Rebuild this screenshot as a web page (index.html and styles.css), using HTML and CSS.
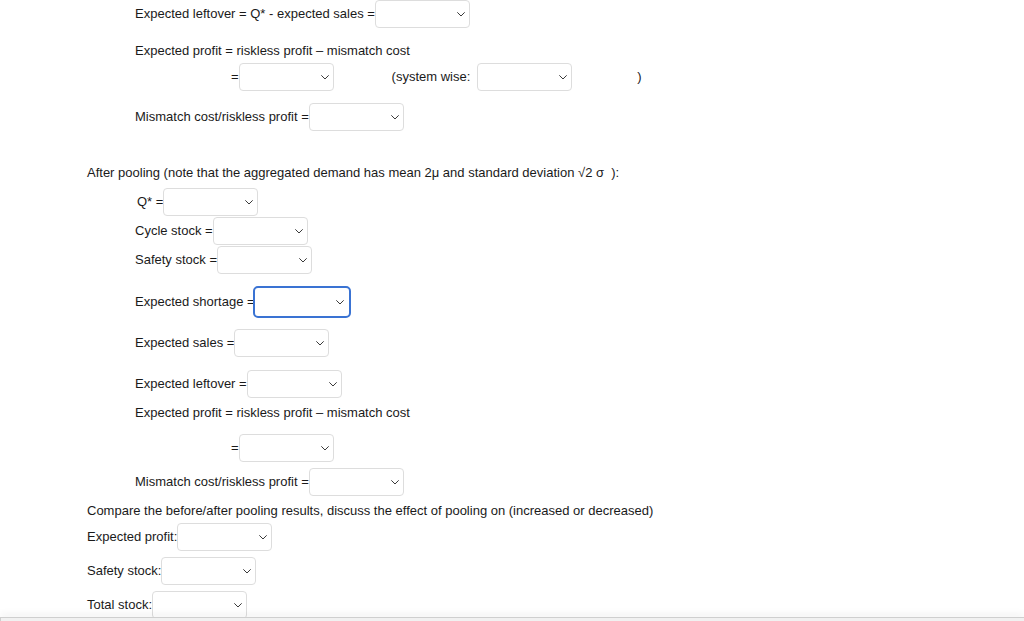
FILE: index.html
```html
<!DOCTYPE html>
<html lang="en">
<head>
<meta charset="utf-8">
<title>Pooling</title>
<link rel="stylesheet" href="styles.css">
</head>
<body>
<div class="page">
  <div class="row sel indent gap-0">
    <span class="lbl">Expected leftover = Q* - expected sales =</span>
    <span class="dd"><select></select><svg class="chev" width="8" height="5" viewBox="0 0 8 5"><path d="M0.6 0.6 L4 4 L7.4 0.6"/></svg></span>
  </div>
  <div class="row txt indent gap-14">Expected profit = riskless profit – mismatch cost</div>
  <div class="row sel eq gap-4">
    <span class="lbl">=</span>
    <span class="dd"><select></select><svg class="chev" width="8" height="5" viewBox="0 0 8 5"><path d="M0.6 0.6 L4 4 L7.4 0.6"/></svg></span>
    <span class="lbl sys">(system wise:</span>
    <span class="dd"><select></select><svg class="chev" width="8" height="5" viewBox="0 0 8 5"><path d="M0.6 0.6 L4 4 L7.4 0.6"/></svg></span>
    <span class="lbl close">)</span>
  </div>
  <div class="row sel indent gap-12">
    <span class="lbl">Mismatch cost/riskless profit =</span>
    <span class="dd"><select></select><svg class="chev" width="8" height="5" viewBox="0 0 8 5"><path d="M0.6 0.6 L4 4 L7.4 0.6"/></svg></span>
  </div>

  <div class="row txt outer gap-33">After pooling (note that the aggregated demand has mean 2μ and standard deviation √2 σ&nbsp;&nbsp;):</div>
  <div class="row sel indent-q gap-7">
    <span class="lbl">Q* =</span>
    <span class="dd"><select></select><svg class="chev" width="8" height="5" viewBox="0 0 8 5"><path d="M0.6 0.6 L4 4 L7.4 0.6"/></svg></span>
  </div>
  <div class="row sel indent gap-1">
    <span class="lbl">Cycle stock =</span>
    <span class="dd"><select></select><svg class="chev" width="8" height="5" viewBox="0 0 8 5"><path d="M0.6 0.6 L4 4 L7.4 0.6"/></svg></span>
  </div>
  <div class="row sel indent gap-1">
    <span class="lbl">Safety stock =</span>
    <span class="dd"><select></select><svg class="chev" width="8" height="5" viewBox="0 0 8 5"><path d="M0.6 0.6 L4 4 L7.4 0.6"/></svg></span>
  </div>
  <div class="row sel indent gap-12">
    <span class="lbl">Expected shortage =</span>
    <span class="dd focus"><select></select><svg class="chev" width="8" height="5" viewBox="0 0 8 5"><path d="M0.6 0.6 L4 4 L7.4 0.6"/></svg></span>
  </div>
  <div class="row sel indent gap-11">
    <span class="lbl">Expected sales =</span>
    <span class="dd"><select></select><svg class="chev" width="8" height="5" viewBox="0 0 8 5"><path d="M0.6 0.6 L4 4 L7.4 0.6"/></svg></span>
  </div>
  <div class="row sel indent gap-13">
    <span class="lbl">Expected leftover =</span>
    <span class="dd"><select></select><svg class="chev" width="8" height="5" viewBox="0 0 8 5"><path d="M0.6 0.6 L4 4 L7.4 0.6"/></svg></span>
  </div>
  <div class="row txt indent gap-6">Expected profit = riskless profit – mismatch cost</div>
  <div class="row sel eq gap-13">
    <span class="lbl">=</span>
    <span class="dd"><select></select><svg class="chev" width="8" height="5" viewBox="0 0 8 5"><path d="M0.6 0.6 L4 4 L7.4 0.6"/></svg></span>
  </div>
  <div class="row sel indent gap-6">
    <span class="lbl">Mismatch cost/riskless profit =</span>
    <span class="dd"><select></select><svg class="chev" width="8" height="5" viewBox="0 0 8 5"><path d="M0.6 0.6 L4 4 L7.4 0.6"/></svg></span>
  </div>

  <div class="row txt outer gap-6">Compare the before/after pooling results, discuss the effect of pooling on (increased or decreased)</div>
  <div class="row sel outer gap-4">
    <span class="lbl">Expected profit:</span>
    <span class="dd"><select></select><svg class="chev" width="8" height="5" viewBox="0 0 8 5"><path d="M0.6 0.6 L4 4 L7.4 0.6"/></svg></span>
  </div>
  <div class="row sel outer gap-6">
    <span class="lbl">Safety stock:</span>
    <span class="dd"><select></select><svg class="chev" width="8" height="5" viewBox="0 0 8 5"><path d="M0.6 0.6 L4 4 L7.4 0.6"/></svg></span>
  </div>
  <div class="row sel outer gap-6">
    <span class="lbl">Total stock:</span>
    <span class="dd"><select></select><svg class="chev" width="8" height="5" viewBox="0 0 8 5"><path d="M0.6 0.6 L4 4 L7.4 0.6"/></svg></span>
  </div>
</div>
<div class="bottom-bar"></div>
</body>
</html>
```

FILE: styles.css
```css
html, body {
  margin: 0;
  padding: 0;
  background: #ffffff;
  overflow: hidden;
}

body {
  font-family: "Liberation Sans", Arial, Helvetica, sans-serif;
  font-size: 13px;
  color: #1a1a1a;
  width: 1024px;
  height: 621px;
}

.page {
  display: flex;
  flex-direction: column;
}

.row {
  display: flex;
  align-items: center;
  white-space: pre;
}

.row.txt {
  height: 16px;
  line-height: 16px;
  padding-top: 1px;
}

.row.sel {
  min-height: 28px;
}

.row.sel .lbl {
  margin-bottom: 1px;
}

.indent { padding-left: 135px; }
.indent-q { padding-left: 137px; }
.outer { padding-left: 87px; }
.eq { padding-left: 231px; }

.gap-0 { margin-top: 0; }
.gap-1 { margin-top: 1px; }
.gap-4 { margin-top: 4px; }
.gap-6 { margin-top: 6px; }
.gap-7 { margin-top: 7px; }
.gap-11 { margin-top: 11px; }
.gap-12 { margin-top: 12px; }
.gap-13 { margin-top: 13px; }
.gap-14 { margin-top: 14px; }
.gap-33 { margin-top: 33px; }

.sys { margin-left: 58px; margin-right: 7px; }
.close { margin-left: 65px; }

.dd {
  position: relative;
  display: inline-flex;
  width: 95px;
  height: 28px;
  box-sizing: border-box;
}

.dd select {
  -webkit-appearance: none;
  appearance: none;
  width: 100%;
  height: 100%;
  box-sizing: border-box;
  border: 1px solid #dddddd;
  border-radius: 4px;
  background: #ffffff;
  margin: 0;
  padding: 0 20px 0 6px;
  font: inherit;
  outline: none;
}

.dd.focus {
  width: 98px;
  height: 32px;
  margin-left: -2px;
}

.dd.focus select {
  border: 2px solid #3a73d3;
  border-radius: 5px;
}

.chev {
  position: absolute;
  right: 5px;
  top: 50%;
  margin-top: -2px;
  pointer-events: none;
}

.dd.focus .chev {
  right: 7px;
}

.chev path {
  fill: none;
  stroke: #3a3a3a;
  stroke-width: 1;
  stroke-linecap: round;
  stroke-linejoin: round;
}

.bottom-bar {
  position: fixed;
  left: 0;
  right: 0;
  bottom: 0;
  height: 3px;
  background: #f1f1f1;
  border-top: 1px solid #cfcfcf;
  border-left: 1px solid #cfcfcf;
  box-shadow: 0 -3px 7px rgba(0, 0, 0, 0.07);
}
```
